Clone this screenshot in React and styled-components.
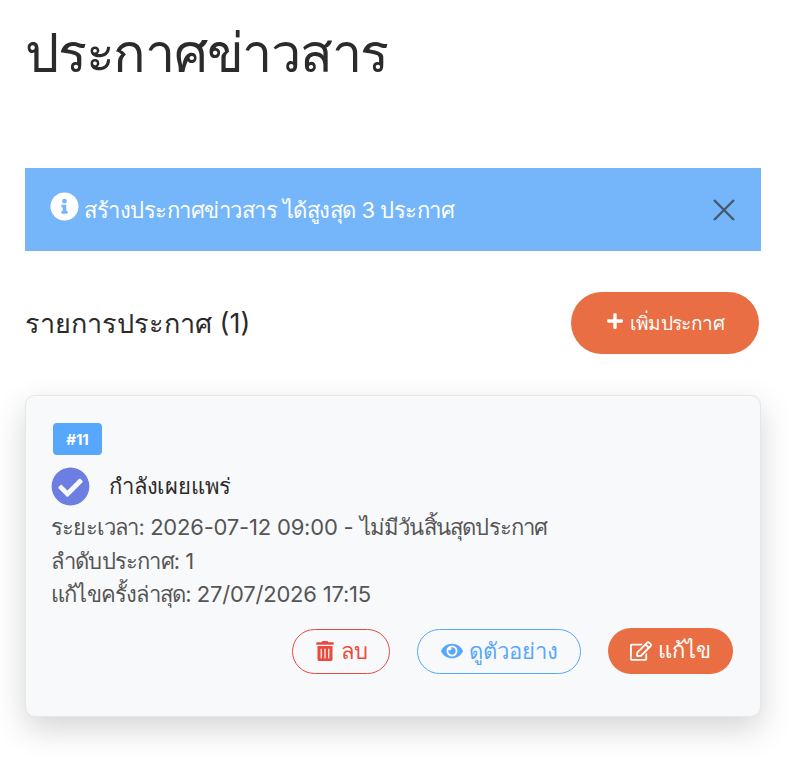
import React from "react";
import styled, { createGlobalStyle } from "styled-components";
import { FaInfoCircle, FaPlus, FaTrashAlt, FaEye, FaRegEdit, FaCheckCircle } from "react-icons/fa";

const GlobalStyle = createGlobalStyle`
  html, body {
    margin: 0;
    background: #fff;
    color: #2b2b2b;
    font-family: "Inter", "Noto Sans", sans-serif;
  }
  * { box-sizing: border-box; }
`;

const Page = styled.div`
  width: 802px;
  height: 760px;
  padding: 0 41px 0 25px;
  overflow: hidden;
`;

const Title = styled.h1`
  margin: 0;
  padding-top: 19px;
  height: 168px;
  font-size: 54px;
  line-height: 68px;
  font-weight: 400;
  letter-spacing: -1.25px;
  color: #2b2b2b;
`;

const Alert = styled.div`
  height: 83px;
  background: #75b6fb;
  padding: 0 25px;
  display: flex;
  align-items: center;
  color: #fff;
  font-size: 22px;
`;

const InfoIcon = styled(FaInfoCircle)`
  margin-top: -6px;
`;

const AlertText = styled.span`
  margin: 2px 0 0 5px;
  letter-spacing: -0.5px;
`;

const Close = styled.button`
  margin-left: auto;
  width: 24px;
  height: 24px;
  padding: 0;
  border: 0;
  background: none;
  display: flex;
`;

const ListHead = styled.div`
  display: flex;
  justify-content: space-between;
  align-items: center;
  margin-top: 41px;
  padding-right: 2px;
`;

const ListTitle = styled.h2`
  margin: 0;
  font-size: 27px;
  font-weight: 400;
  color: #2b2b2b;
`;

const Button = styled.button`
  height: ${({ $h }) => $h}px;
  padding: 0 ${({ $px }) => $px}px;
  border-radius: 31px;
  border: ${({ $line }) => ($line ? `1px solid ${$line}` : "0")};
  background: ${({ $line }) => ($line ? "transparent" : "#ea6e43")};
  color: ${({ $color }) => $color || "#fff"};
  font-family: inherit;
  font-size: ${({ $fs }) => $fs || 22}px;
  letter-spacing: ${({ $ls }) => $ls || 0}px;
  display: inline-flex;
  align-items: center;
  gap: 6px;
`;

const PlusIcon = styled(FaPlus)`
  margin-top: -4px;
`;

const Card = styled.section`
  margin-top: 41px;
  height: 322px;
  padding: 27px 27px 0 25px;
  background: #f8f9fb;
  border: 1px solid #e5e6e8;
  border-radius: 10px;
  box-shadow: 0 12px 32px rgba(0, 0, 0, 0.17);
`;

const Badge = styled.span`
  display: flex;
  align-items: center;
  justify-content: center;
  width: 49px;
  height: 32px;
  margin-left: 2px;
  background: #57a7fd;
  border-radius: 4px;
  color: #fff;
  font-size: 15px;
  font-weight: 700;
`;

const Status = styled.div`
  display: flex;
  align-items: center;
  gap: 19px;
  margin-top: 12px;
  font-size: 22px;
  font-weight: 500;
  letter-spacing: -0.2px;
  color: #2b2b2b;
`;

const Meta = styled.div`
  margin-top: 5px;
  font-size: 22px;
  line-height: 33.5px;
  letter-spacing: -0.2px;
  color: #555;
`;

const Thai = styled.span`
  letter-spacing: -0.8px;
`;

const Actions = styled.div`
  display: flex;
  justify-content: flex-end;
  align-items: flex-end;
  gap: 27px;
  margin-top: 16px;
`;

export default function App() {
  return (
    <Page>
      <GlobalStyle />
      <Title>ประกาศข่าวสาร</Title>
      <Alert>
        <InfoIcon size={29} />
        <AlertText>สร้างประกาศข่าวสาร ได้สูงสุด 3 ประกาศ</AlertText>
        <Close aria-label="close">
          <svg width="24" height="24" viewBox="0 0 24 24">
            <path d="M2 2 L22 22 M22 2 L2 22" stroke="#44596e" strokeWidth="2.4" />
          </svg>
        </Close>
      </Alert>
      <ListHead>
        <ListTitle>รายการประกาศ (1)</ListTitle>
        <Button $h={62} $px={35} $fs={19} $ls={-0.6}>
          <PlusIcon size={18} />
          เพิ่มประกาศ
        </Button>
      </ListHead>
      <Card>
        <Badge>#11</Badge>
        <Status>
          <FaCheckCircle size={39} color="#6c7ee1" />
          กำลังเผยแพร่
        </Status>
        <Meta>
          <div><Thai>ระยะเวลา:</Thai> 2026-07-12 09:00 - <Thai>ไม่มีวันสิ้นสุดประกาศ</Thai></div>
          <div><Thai>ลำดับประกาศ:</Thai> 1</div>
          <div><Thai>แก้ไขครั้งล่าสุด:</Thai> 27/07/2026 17:15</div>
        </Meta>
        <Actions>
          <Button $h={45} $px={21.5} $line="#ea4a3f" $color="#ea4a3f">
            <FaTrashAlt size={20} />
            ลบ
          </Button>
          <Button $h={45} $px={22.5} $line="#57a7fd" $color="#57a7fd">
            <FaEye size={22} />
            ดูตัวอย่าง
          </Button>
          <Button $h={46} $px={22}>
            <FaRegEdit size={22} />
            แก้ไข
          </Button>
        </Actions>
      </Card>
    </Page>
  );
}
